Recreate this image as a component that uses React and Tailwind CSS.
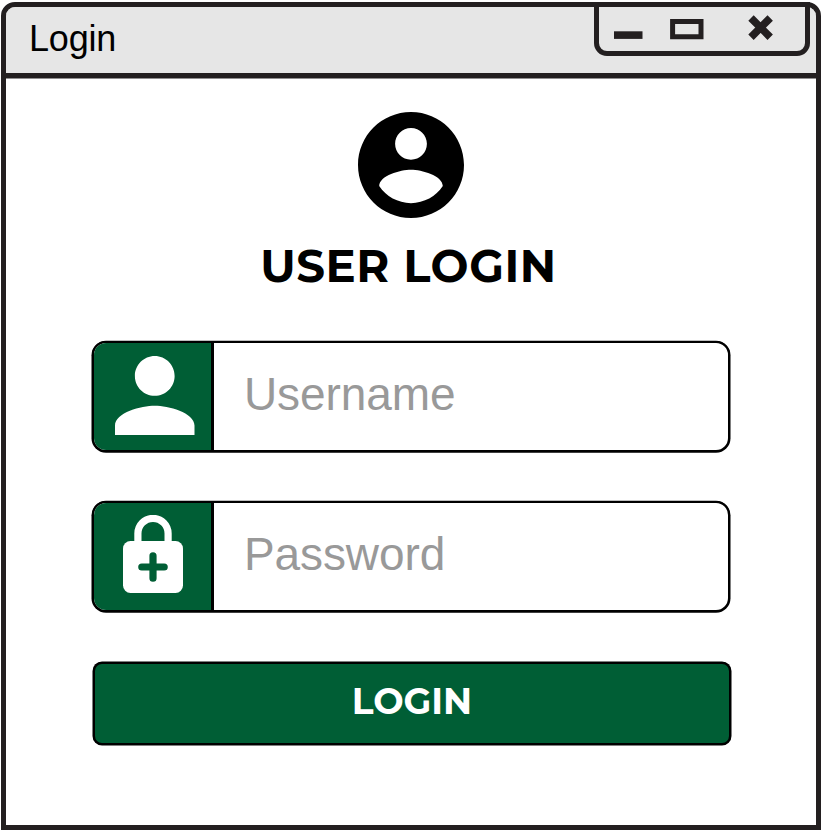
function WindowControls() {
  return (
    <div className="-mt-[5px] mr-[6px] h-[54px] w-[216px] rounded-b-[13px] border-[5px] border-[#231f20]">
      <svg className="block h-[44px] w-[206px]" viewBox="599 7 206 44" fill="none" stroke="#231f20">
        <path d="M614 35.1h28.5" strokeWidth="7.6" />
        <path d="M672.6 21.6h28.4v15.2h-28.4z" strokeWidth="5" />
        <path d="M751 18l19.2 19.2M770.2 18L751 37.2" strokeWidth="7.6" />
      </svg>
    </div>
  );
}

function PersonIcon() {
  return (
    <svg className="mb-[2px] ml-[5px] size-[79.5px]" viewBox="4 4 16 16" fill="#fff">
      <path d="M12 12c2.21 0 4-1.79 4-4s-1.79-4-4-4-4 1.79-4 4 1.79 4 4 4zm0 2c-2.67 0-8 1.34-8 4v2h16v-2c0-2.66-5.33-4-8-4z" />
    </svg>
  );
}

function LockIcon() {
  return (
    <svg className="mb-[5px] h-[78px] w-[60px]" viewBox="0 0 60 78">
      <path d="M14.9 30V18.5a15.1 15.1 0 0 1 30.2 0V30" fill="none" stroke="#fff" strokeWidth="7.2" />
      <rect y="26" width="60" height="52" rx="7.5" fill="#fff" />
      <path d="M30 40.8v22.4M18.8 52h22.4" stroke="#005e35" strokeWidth="7.2" strokeLinecap="round" />
    </svg>
  );
}

function Field({ icon, type, placeholder }) {
  return (
    <label className="flex h-[111px] w-[638px] overflow-hidden rounded-[14px] border-2 border-black bg-white shadow-[0_0.3px_0_0.5px_#000]">
      <span className="flex w-[120px] shrink-0 items-center justify-center border-r-[3px] border-black bg-[#005e35]">
        {icon}
      </span>
      <input
        type={type}
        placeholder={placeholder}
        className="min-w-0 flex-1 bg-transparent pb-[5px] pl-[30px] font-['Liberation_Sans',Arial,sans-serif] text-[46px] tracking-[-0.1px] text-black outline-none placeholder:text-[#999999]"
      />
    </label>
  );
}

export default function App() {
  return (
    <div className="h-[831px] w-[824px] bg-white pl-px pt-[2px] font-['Liberation_Sans',Arial,sans-serif]">
      <main className="flex h-[828px] w-[820px] flex-col rounded-t-[14px] border-[5px] border-[#231f20] bg-white">
        <header className="flex h-[71px] shrink-0 justify-between rounded-t-[9px] border-b-[5px] border-[#231f20] bg-[#e6e6e6] shadow-[0_0.5px_0_#231f20]">
          <span className="pl-[23px] pt-[11px] text-[36px] leading-[42px] tracking-[-0.2px] text-black">Login</span>
          <WindowControls />
        </header>
        <form className="flex flex-col pl-[86px] pt-[34px]">
          <div className="flex w-[637px] flex-col items-center">
            <svg className="block size-[106px]" viewBox="2 2 20 20">
              <path d="M12 2C6.48 2 2 6.48 2 12s4.48 10 10 10 10-4.48 10-10S17.52 2 12 2zm0 3c1.66 0 3 1.34 3 3s-1.34 3-3 3-3-1.34-3-3 1.34-3 3-3zm0 14.2c-2.5 0-4.71-1.28-6-3.22.03-1.99 4-3.08 6-3.08 1.99 0 5.97 1.09 6 3.08-1.29 1.94-3.5 3.22-6 3.22z" />
            </svg>
            <h1 className="mb-[46px] mt-[19px] whitespace-nowrap pr-[4px] font-['Montserrat',Inter,sans-serif] text-[45px] font-bold leading-[58px] tracking-[0.6px] text-black">
              USER LOGIN
            </h1>
          </div>
          <Field icon={<PersonIcon />} type="text" placeholder="Username" />
          <div className="h-[49px]" />
          <Field icon={<LockIcon />} type="password" placeholder="Password" />
          <button
            type="button"
            className="ml-px mt-[50px] h-[83px] w-[638px] rounded-[9px] border-2 border-black bg-[#005e35] pb-[6px] font-['Montserrat',Inter,sans-serif] text-[36px] font-bold text-white shadow-[0_0_0_0.5px_#000]"
          >
            LOGIN
          </button>
        </form>
      </main>
    </div>
  );
}
